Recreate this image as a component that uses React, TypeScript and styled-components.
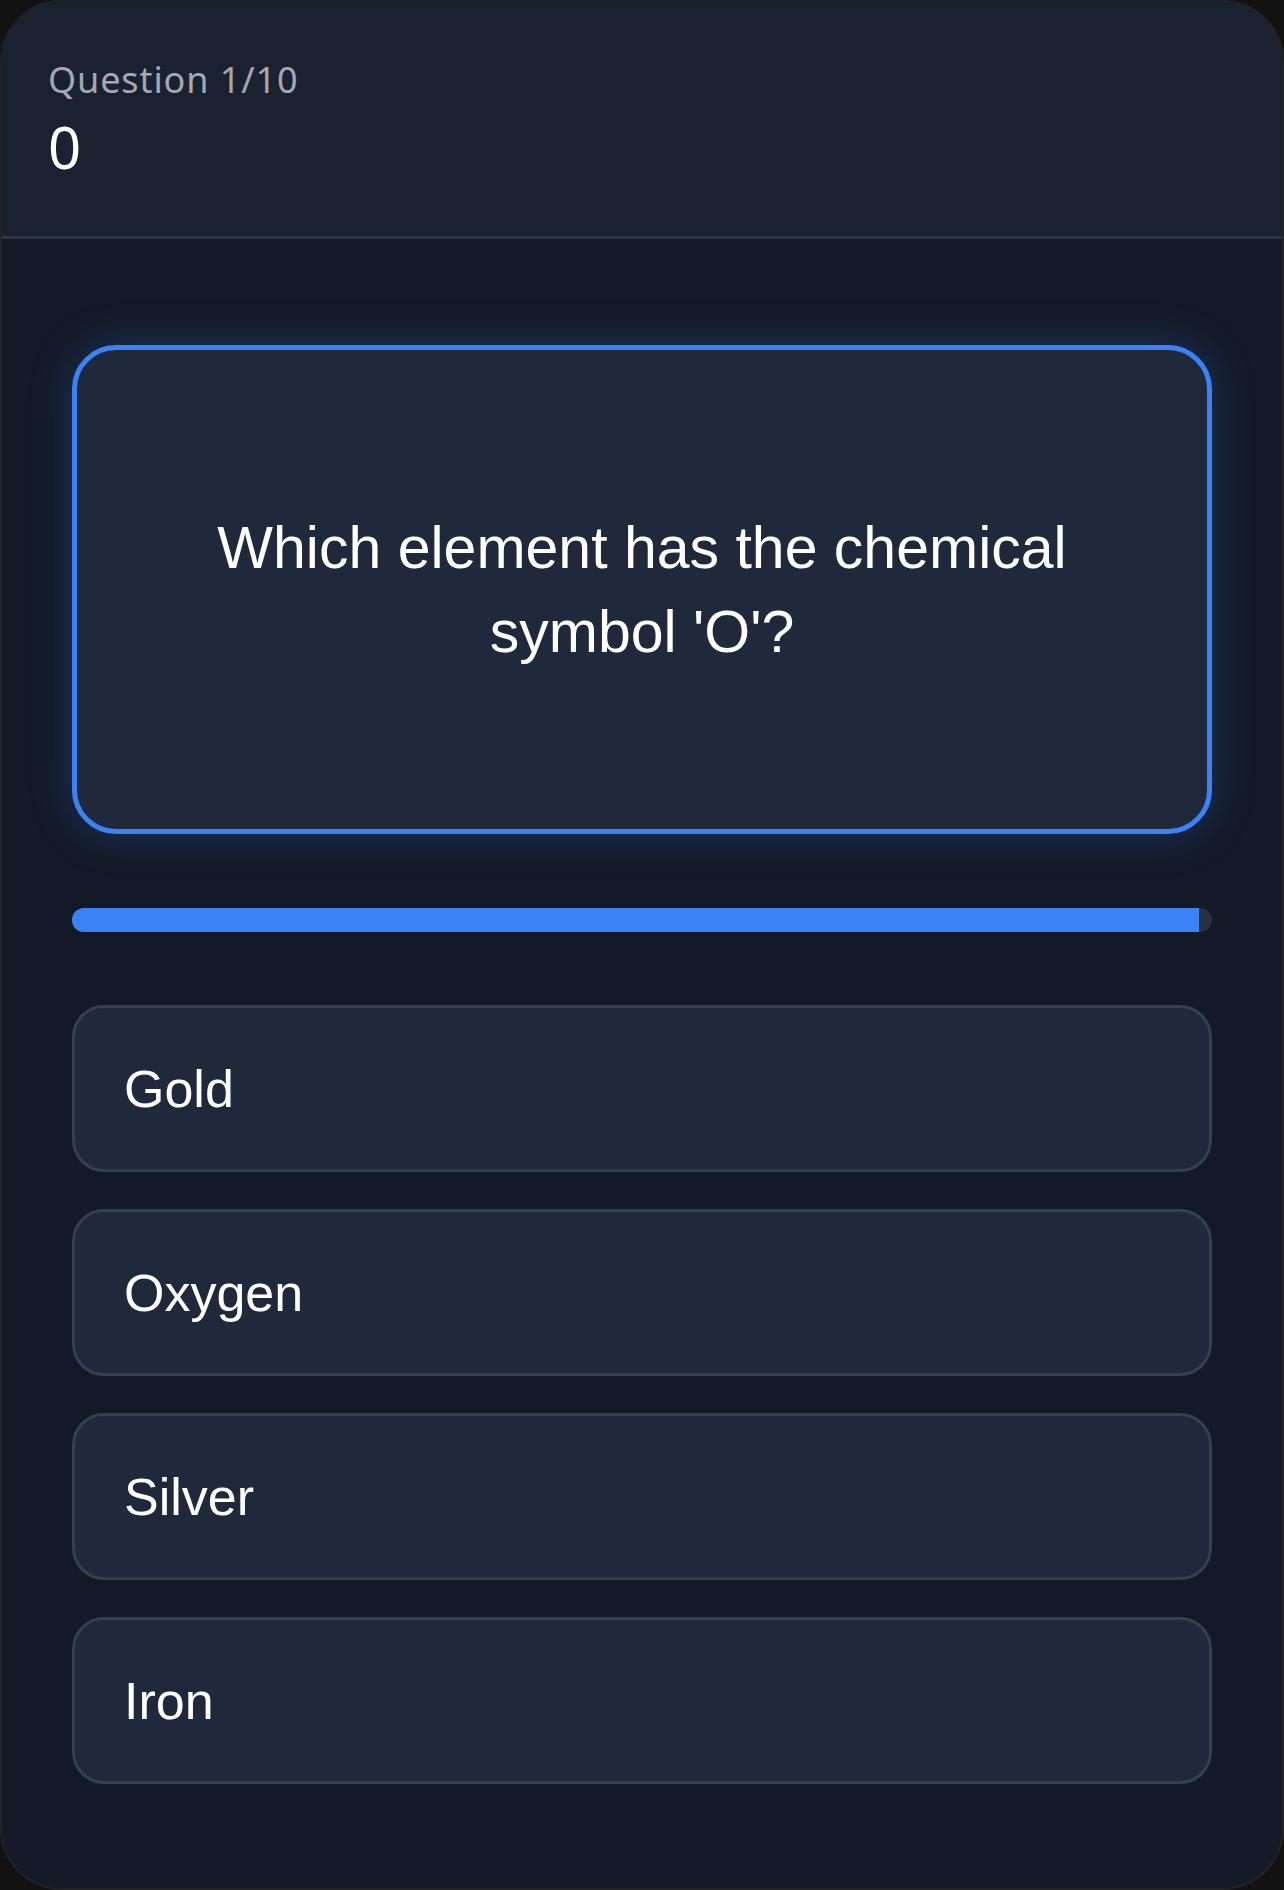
import styled, { createGlobalStyle } from "styled-components"

const GlobalStyle = createGlobalStyle`
    html, body {
        margin: 0;
        padding: 0;
        background: #121212;
    }
    * {
        box-sizing: border-box;
    }
`

type Option = {
    id: number;
    label: string;
}

const options: Option[] = [
    { id: 1, label: 'Gold' },
    { id: 2, label: 'Oxygen' },
    { id: 3, label: 'Silver' },
    { id: 4, label: 'Iron' },
]

export default function App() {
    const timeLeft = 98.9

    return <>
        <GlobalStyle />
        <Frame>
            <Header>
                <QuestionCount>Question 1/10</QuestionCount>
                <Score>0</Score>
            </Header>
            <Main>
                <QuestionCard>
                    <QuestionText>Which element has the chemical symbol 'O'?</QuestionText>
                </QuestionCard>
                <TimerTrack>
                    <TimerFill style={{ width: `${timeLeft}%` }} />
                </TimerTrack>
                <OptionList>
                    {options.map(option => (
                        <OptionButton key={option.id}>{option.label}</OptionButton>
                    ))}
                </OptionList>
            </Main>
        </Frame>
    </>
}

const Frame = styled.div`
    width: 1284px;
    height: 1890px;
    border: 2px solid #232323;
    border-radius: 62px;
    overflow: hidden;
    background: #131926;
    display: flex;
    flex-direction: column;
`;

const Header = styled.header`
    background: #1a2232;
    border-bottom: 3px solid #2c3545;
    height: 237px;
    padding: 54px 46px 0;
    display: flex;
    flex-direction: column;
`;

const QuestionCount = styled.div`
    font-family: "Noto Sans", sans-serif;
    font-size: 36px;
    line-height: 48px;
    letter-spacing: 0.9px;
    color: #a3a8b3;
`;

const Score = styled.div`
    margin-top: 5px;
    font-family: "Noto Sans", sans-serif;
    font-size: 58px;
    line-height: 76px;
    letter-spacing: 1px;
    color: #ffffff;
`;

const Main = styled.main`
    flex: 1;
    padding: 106px 70px 0;
    display: flex;
    flex-direction: column;
`;

const QuestionCard = styled.div`
    height: 489px;
    background: #1f293b;
    border: 5px solid #3b82f6;
    border-radius: 44px;
    box-shadow: 0 0 44px rgba(59, 130, 246, 0.28);
    display: flex;
    align-items: center;
    justify-content: center;
    padding: 0 100px;
`;

const QuestionText = styled.h2`
    margin: 0;
    font-family: "Liberation Sans", Arial, sans-serif;
    font-weight: 400;
    font-size: 59px;
    line-height: 84px;
    color: #ffffff;
    text-align: center;
`;

const TimerTrack = styled.div`
    margin-top: 74px;
    height: 24px;
    border-radius: 12px;
    background: #2a3142;
    overflow: hidden;
`;

const TimerFill = styled.div`
    height: 100%;
    background: #3b82f6;
`;

const OptionList = styled.div`
    margin-top: 73px;
    display: flex;
    flex-direction: column;
    gap: 37px;
`;

const OptionButton = styled.button`
    height: 167px;
    background: #1f293b;
    border: 3px solid #343f51;
    border-radius: 32px;
    padding: 0 49px;
    text-align: left;
    font-family: "Liberation Sans", Arial, sans-serif;
    font-size: 52px;
    color: #ffffff;
    cursor: pointer;
`;
